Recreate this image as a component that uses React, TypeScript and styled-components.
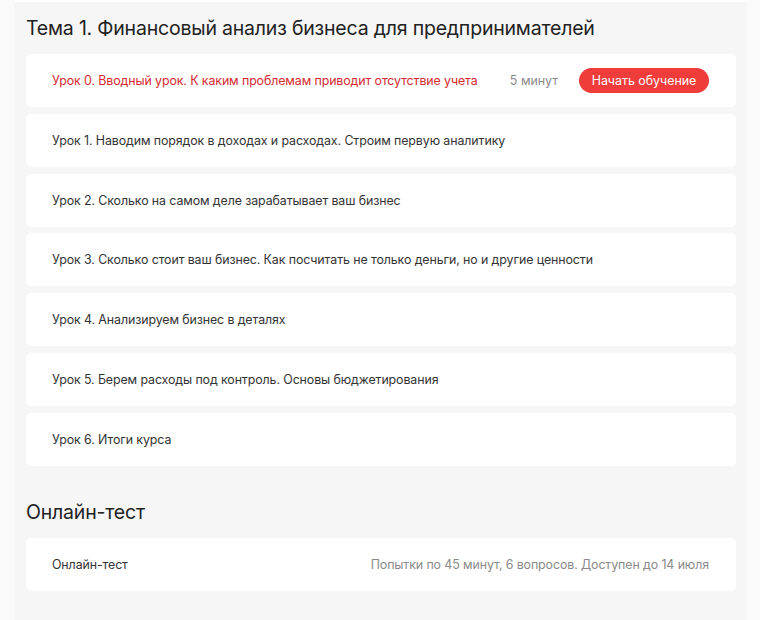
import React from 'react';
import styled, { createGlobalStyle } from 'styled-components';

const lessons = [
  'Урок 0. Вводный урок. К каким проблемам приводит отсутствие учета',
  'Урок 1. Наводим порядок в доходах и расходах. Строим первую аналитику',
  'Урок 2. Сколько на самом деле зарабатывает ваш бизнес',
  'Урок 3. Сколько стоит ваш бизнес. Как посчитать не только деньги, но и другие ценности',
  'Урок 4. Анализируем бизнес в деталях',
  'Урок 5. Берем расходы под контроль. Основы бюджетирования',
  'Урок 6. Итоги курса',
];

export default function App() {
  return (
    <>
      <GlobalStyle />
      <Page>
        <Panel>
          <Section>
            <Heading>Тема 1. Финансовый анализ бизнеса для предпринимателей</Heading>
            <List>
              {lessons.map((title, i) => (
                <Card key={title}>
                  <LessonTitle $active={i === 0}>{title}</LessonTitle>
                  {i === 0 && (
                    <Meta>
                      <Duration>5 минут</Duration>
                      <StartButton>Начать обучение</StartButton>
                    </Meta>
                  )}
                </Card>
              ))}
            </List>
          </Section>

          <Section>
            <Heading>Онлайн-тест</Heading>
            <List>
              <Card>
                <LessonTitle>Онлайн-тест</LessonTitle>
                <Info>Попытки по 45 минут, 6 вопросов. Доступен до 14 июля</Info>
              </Card>
            </List>
          </Section>
        </Panel>
      </Page>
    </>
  );
}

const GlobalStyle = createGlobalStyle`
  html, body {
    margin: 0;
    padding: 0;
    background: #fafafa;
    font-family: Inter, "Noto Sans", Arial, sans-serif;
  }
`;

const Page = styled.div`
  padding-left: 15px;
  width: 732px;
`;

const Panel = styled.div`
  background: #f6f6f6;
  border-top: 2px solid #ffffff;
  padding: 12px 11px 30px 11px;
  display: flex;
  flex-direction: column;
  gap: 32px;
  min-height: 576px;
`;

const Section = styled.div`
  display: flex;
  flex-direction: column;
  gap: 12px;
`;

const Heading = styled.h2`
  margin: 0;
  font-size: 19.5px;
  font-weight: 400;
  line-height: 28px;
  color: #222222;
  letter-spacing: -0.2px;
`;

const List = styled.div`
  display: flex;
  flex-direction: column;
  gap: 6.8px;
`;

const Card = styled.div`
  background: #ffffff;
  border-radius: 5px;
  height: 53px;
  padding: 0 27px 0 26px;
  display: flex;
  align-items: center;
  justify-content: space-between;
  box-sizing: border-box;
`;

const LessonTitle = styled.div<{ $active?: boolean }>`
  font-size: 12.4px;
  color: ${(p) => (p.$active ? '#d32a2f' : '#333333')};
  letter-spacing: -0.1px;
`;

const Meta = styled.div`
  display: flex;
  align-items: center;
  gap: 21px;
`;

const Duration = styled.span`
  font-size: 12.4px;
  color: #8a8a8a;
`;

const StartButton = styled.button`
  border: none;
  background: #f03c3a;
  color: #ffffff;
  font-family: inherit;
  font-size: 12.4px;
  height: 25px;
  width: 130px;
  border-radius: 13px;
  padding: 0;
  cursor: pointer;
`;

const Info = styled.div`
  font-size: 12.4px;
  color: #8a8a8a;
  letter-spacing: -0.1px;
`;
